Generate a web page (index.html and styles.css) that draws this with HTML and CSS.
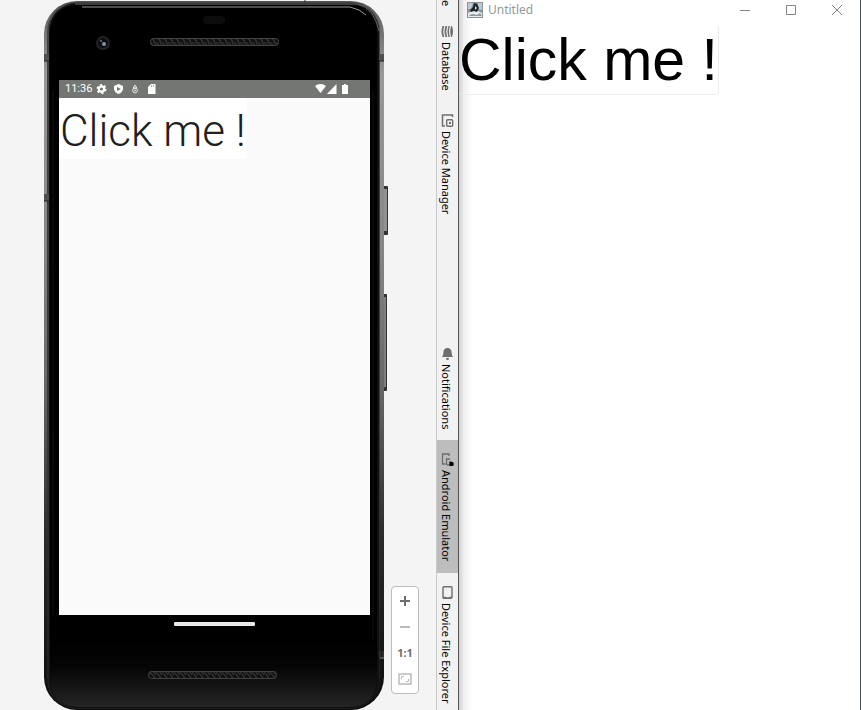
FILE: index.html
```html
<!DOCTYPE html>
<html lang="en">
<head>
<meta charset="utf-8">
<title>Click me</title>
<link rel="stylesheet" href="styles.css">
</head>
<body>
<main class="emulator">
  <section class="phone">
    <svg class="phone-art" viewBox="44 0 344 710" width="344" height="710" aria-hidden="true">
      <defs>
        <linearGradient id="metal" x1="0" y1="0" x2="0" y2="1">
          <stop offset="0" stop-color="#555"/><stop offset=".1" stop-color="#999"/><stop offset=".35" stop-color="#858585"/><stop offset=".55" stop-color="#666"/><stop offset=".75" stop-color="#2c2c2c"/><stop offset="1" stop-color="#0c0c0c"/>
        </linearGradient>
        <linearGradient id="rim" x1="0" y1="0" x2="0" y2="1">
          <stop offset="0" stop-color="#444"/><stop offset=".6" stop-color="#3a3a3a"/><stop offset="1" stop-color="#1c1c1c"/>
        </linearGradient>
        <linearGradient id="top" x1="0" y1="0" x2="1" y2="0">
          <stop offset="0" stop-color="#aaa" stop-opacity="0"/><stop offset=".3" stop-color="#8c8c8c"/><stop offset=".75" stop-color="#c8c8c8"/><stop offset="1" stop-color="#aaa" stop-opacity="0"/>
        </linearGradient>
        <linearGradient id="chin" x1="0" y1="0" x2="0" y2="1">
          <stop offset="0" stop-color="#000"/><stop offset=".4" stop-color="#050505"/><stop offset="1" stop-color="#252525"/>
        </linearGradient>
        <pattern id="mesh" width="6" height="6" patternUnits="userSpaceOnUse">
          <rect width="6" height="6" fill="#101010"/><path d="M0 0l5 6M3-1l5 6" stroke="#303030" stroke-width="1.5"/>
        </pattern>
      </defs>
      <rect x="383" y="186" width="5" height="49" rx="1" fill="#333"/><rect x="384" y="189" width="3" height="42" fill="#929292"/>
      <rect x="383" y="294" width="4" height="97" rx="1" fill="#333"/><rect x="384" y="297" width="2" height="90" fill="#7f7f7f"/>
      <path d="M75 .5H355" stroke="url(#top)" stroke-width="3"/>
      <rect x="44" y="1" width="340" height="709" rx="33" fill="url(#metal)"/>
      <rect x="47" y="2" width="333" height="707" rx="30" fill="url(#rim)"/>
      <rect x="49" y="3" width="330" height="705" rx="28" fill="#101010"/>
      <rect x="50" y="5" width="327" height="702" rx="27" fill="#000"/>
      <path d="M50 640H377V680Q375 707 350 707H78Q52 707 50 680Z" fill="url(#chin)"/>
      <path d="M53 90V615M373 90V640" stroke="#111"/>
      <path d="M75 2H355" stroke="url(#top)" stroke-width="1"/>
      <path d="M75 4H357Q374 7 379 31" stroke="#666" fill="none"/>
      <path d="M82 7H350Q360 9 366 15" stroke="#999" fill="none"/>
      <path d="M305 0V3" stroke="#333"/>
      <path d="M44 54H49V61H44ZM379 54H384V61H379ZM44 194H49V201H44Z" fill="#505050"/>
      <path d="M44 61H49M379 61H384M44 201H49" stroke="#222"/>
      <path d="M380 651V658M383 651V658" stroke="#444"/>
      <path d="M380 658H384" stroke="#888"/>
      <rect x="203" y="16" width="22" height="8" rx="4" fill="#0d0d0d"/>
      <circle cx="103" cy="43" r="7" fill="#242424"/><circle cx="103" cy="43" r="5" fill="#0b0d11"/><circle cx="104" cy="44" r="2" fill="#8195aa"/><circle cx="101" cy="41" r="1" fill="#777"/>
      <rect x="150.500" y="38.500" width="128" height="7" rx="3" fill="url(#mesh)" stroke="#444"/>
      <rect x="148.500" y="671.500" width="128" height="7" rx="3" fill="url(#mesh)" stroke="#444"/>
      <rect x="174" y="622" width="81" height="4" rx="1" fill="#e8eaea"/>
    </svg>
    <div class="screen">
      <header class="status">
        <span>11:36</span>
        <svg class="status-left" viewBox="96 83 62 12" width="62" height="12" aria-hidden="true">
          <circle cx="101.500" cy="89" r="2.700" fill="none" stroke="#fff" stroke-width="2.200"/><circle cx="101.500" cy="89" r="4.200" fill="none" stroke="#fff" stroke-width="1.600" stroke-dasharray="2.200 2.200"/>
          <path d="M118.500 84L123 86V89Q122 93 118.500 94Q115 93 114 89V86Z" fill="#fff"/><path d="M117 87V91L121 89Z" fill="#747674"/>
          <g fill="none" stroke="#fff" stroke-width=".8"><path d="M135 85L133.200 88H136.800Z"/><circle cx="135" cy="90.500" r="2.400"/><circle cx="135" cy="90.500" r=".6"/></g>
          <path d="M151 84H155.500V94H148V87Z" fill="#fff"/><path d="M151.500 85V87M153.500 85V87" stroke="#888" stroke-width=".7"/>
        </svg>
        <svg class="status-right" viewBox="315 83 36 12" width="36" height="12" aria-hidden="true">
          <path d="M316 86Q321.500 82 327 86L321.500 93Z" fill="#fff"/><path d="M328 94L337.500 84V94Z" fill="#fff"/><path d="M343 85H345V84H347V85H349V94H343Z" fill="#fff"/>
        </svg>
      </header>
      <button class="android-button" type="button">Click me !</button>
    </div>
  </section>
  <div class="zoom-tools">
    <button type="button" aria-label="Zoom in"><svg viewBox="0 0 12 12" width="12" height="12"><path d="M1 6H11M6 1V11" stroke="#6e6e6e" stroke-width="2"/></svg></button>
    <button type="button" aria-label="Zoom out"><svg viewBox="0 0 12 12" width="12" height="12"><path d="M1 6H11" stroke="#bbb" stroke-width="2"/></svg></button>
    <button type="button">1:1</button>
    <button type="button" aria-label="Fit"><svg viewBox="0 0 14 12" width="14" height="12"><path d="M1 1H13V11H1Z" fill="none" stroke="#bbb" stroke-width="1.500"/><path d="M3.500 6V3.500H6M8 8.500H10.500V6" fill="none" stroke="#bbb"/></svg></button>
  </div>
</main>
<nav class="rail">
  <button class="tab cut" type="button"><span>e</span></button>
  <button class="tab" type="button"><svg viewBox="0 0 13 13" width="13" height="13"><g fill="#6e6e6e"><path d="M1.500 1Q-.5 6.500 1.500 12H3.300Q1.300 6.500 3.300 1ZM4.500 1Q2.500 6.500 4.500 12H6.300Q4.300 6.500 6.300 1ZM7.500 1Q5.500 6.500 7.500 12H9Q7 6.500 9 1ZM10.200 1Q8.200 6.500 10.200 12H11Q13 6.500 11 1Z"/></g></svg><span>Database</span></button>
  <button class="tab" type="button"><svg viewBox="0 0 13 13" width="13" height="13"><path d="M11.500 3V1H1.500V12H4" fill="none" stroke="#6e6e6e" stroke-width="1.500"/><rect x="5.700" y="5.700" width="6" height="6.500" rx="1" fill="none" stroke="#6e6e6e" stroke-width="1.400"/><path d="M8 8H10V10H8Z" fill="#6e6e6e"/></svg><span>Device Manager</span></button>
  <button class="tab lower push" type="button"><svg viewBox="0 0 13 13" width="13" height="13"><path d="M1 10Q2.500 8 2.500 4.500Q3 1 6.500 1Q10 1 10.500 4.500Q10.500 8 12 10ZM5 11H8L7.500 13H5.500Z" fill="#6e6e6e"/></svg><span>Notifications</span></button>
  <button class="tab lower selected" type="button"><svg viewBox="0 0 13 13" width="13" height="13"><path d="M8 3V1H1.500V11H4.500M5.500 12V6H9M6 12H11" fill="none" stroke="#6e6e6e" stroke-width="1.300"/><path d="M8 8H10V10H8Z" fill="#6e6e6e"/><circle cx="10.500" cy="11" r="2.300" fill="#000"/></svg><span>Android Emulator</span></button>
  <button class="tab lower last" type="button"><svg viewBox="0 0 13 13" width="13" height="13"><rect x="2" y=".8" width="9" height="11.500" rx="1" fill="none" stroke="#6e6e6e" stroke-width="1.400"/><path d="M2 10.700H5V11.500H8V10.700H11V12H2Z" fill="#6e6e6e"/></svg><span>Device File Explorer</span></button>
</nav>
<section class="window">
  <header class="titlebar">
    <svg viewBox="0 0 16 16" width="16" height="16" aria-hidden="true"><rect width="16" height="16" fill="#8794a0"/><path d="M1 1H6L4 7H1ZM11 1H15V8L11 7Z" fill="#bdc8cf"/><path d="M1 11L5 9H11L15 11V15H1Z" fill="#e8eceb"/><path d="M7 1L10 2L12 6L10 10L7 9L4 10L3 8L6 5Z" fill="#202326"/><path d="M2 13L6 12L10 13L13 11L15 14H3Z" fill="#8d969a"/><path d="M8 4L10 6L8 8Z" fill="#ddd"/></svg>
    <h1>Untitled</h1>
    <div class="controls">
      <button type="button" aria-label="Minimize"><svg viewBox="0 0 10 10" width="10" height="10"><path d="M0 5.500H10"/></svg></button>
      <button type="button" aria-label="Maximize"><svg viewBox="0 0 10 10" width="10" height="10"><path d="M.5 .5H9.500V9.500H.5Z"/></svg></button>
      <button type="button" aria-label="Close"><svg viewBox="0 0 10 10" width="10" height="10"><path d="M0 0L10 10M10 0L0 10"/></svg></button>
    </div>
  </header>
  <button class="desktop-button" type="button">Click me !</button>
</section>
</body>
</html>
```
FILE: styles.css
```css
* { box-sizing: border-box; }
body {
  margin: 0;
  min-height: 100vh;
  display: flex;
  overflow: hidden;
  background: #fff;
  font-family: "Noto Sans", sans-serif;
}
button { margin: 0; padding: 0; border: 0; background: none; color: inherit; font: inherit; }
svg { display: block; flex: none; }

.emulator { flex: none; display: flex; gap: 3px; padding-left: 44px; padding-right: 17px; background: #f4f4f4; }
.phone { position: relative; width: 344px; padding: 80px 18px 95px 15px; display: flex; }
.phone-art { position: absolute; top: 0; left: 0; }
.screen { position: relative; flex: 1; background: #fafafa; }
.status {
  display: flex;
  align-items: center;
  height: 18px;
  padding: 0 20px 0 6px;
  background: #747674;
  color: #fff;
  font: 11px/18px Roboto, sans-serif;
}
.status-left { margin-left: 4px; }
.status-right { margin-left: auto; }
.android-button {
  display: block;
  padding: 6px 1px 1px;
  border-radius: 4px;
  background: #fff;
  color: #202020;
  font: 300 44px/54px Roboto, sans-serif;
  white-space: nowrap;
}
.zoom-tools {
  align-self: flex-end;
  width: 28px;
  margin-bottom: 16px;
  padding: 1px 0;
  border: 1px solid #bdbdbd;
  border-radius: 4px;
  background: #fff;
}
.zoom-tools button {
  display: grid;
  place-items: center;
  width: 100%;
  height: 26px;
  color: #6e6e6e;
  font: bold 11px/26px "Noto Sans", sans-serif;
}

.rail {
  flex: none;
  display: flex;
  flex-direction: column;
  width: 23px;
  height: 100vh;
  border-left: 1px solid #c9c9c9;
  border-right: 1px solid #555;
  background: #f2f2f2;
}
.tab {
  flex: none;
  display: flex;
  flex-direction: column;
  align-items: center;
  gap: 4px;
  padding: 12px 0 11px;
  color: #000;
  font-size: 11px;
  line-height: 16px;
}
.tab span { margin-right: 3px; writing-mode: vertical-rl; white-space: nowrap; }
.cut { padding: 0 0 7px; }
.lower { padding-top: 13px; }
.push { margin-top: auto; }
.selected { background: #bdbdbd; }
.last { padding-bottom: 7px; }

.window {
  flex: 1;
  min-width: 0;
  border-right: 1px solid #4c5058;
  background: linear-gradient(to right, #d0d0d0, #f0f0f0 5px, #fff 13px);
}
.titlebar { display: flex; align-items: center; height: 19px; padding-left: 8px; }
.titlebar h1 { margin: 0 0 0 5px; color: #929b98; font-size: 12px; line-height: 19px; font-weight: 400; }
.controls { display: flex; margin-left: auto; }
.controls button { display: grid; place-items: center; width: 46px; height: 19px; }
.controls path { fill: none; stroke: #858585; }
.desktop-button {
  display: block;
  margin-top: 6px;
  border: 1px solid #ececec;
  border-left: 0;
  border-top-color: transparent;
  border-radius: 4px;
  color: #000;
  font: 59px/68px "Liberation Sans", Arial, sans-serif;
  white-space: nowrap;
}
```
